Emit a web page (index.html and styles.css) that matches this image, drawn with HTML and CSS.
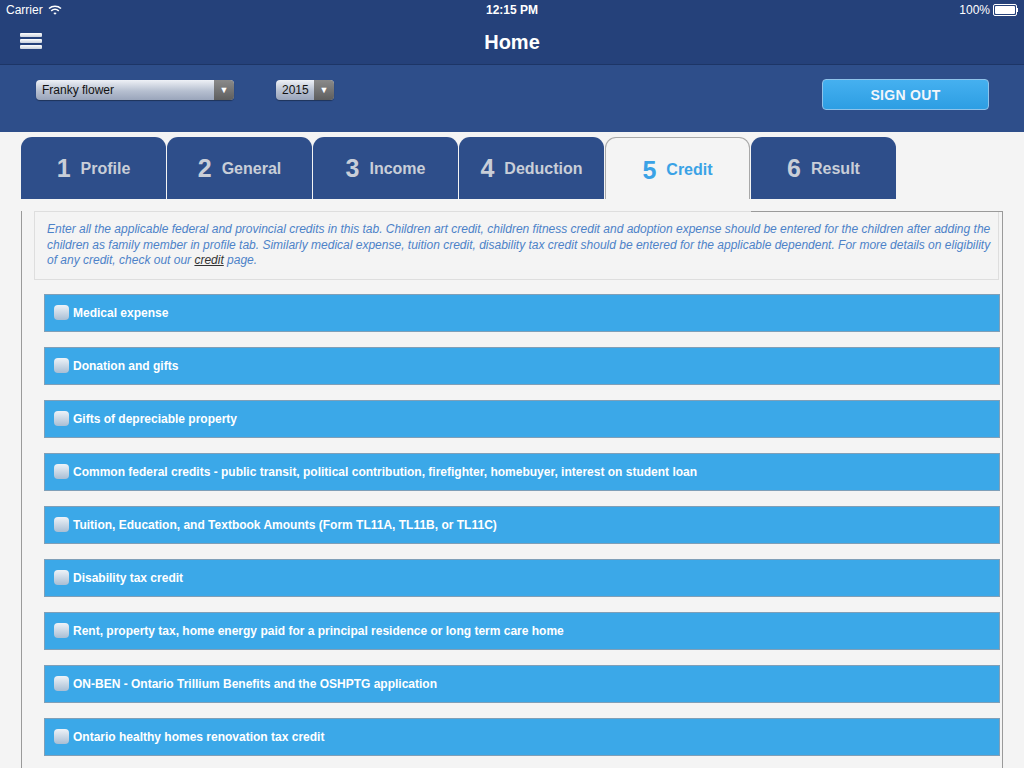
FILE: index.html
```html
<html>
<head>
  <link rel="stylesheet" href="styles.css">
</head>
<body>
  <div class="status-bar">
    <div class="carrier">Carrier
      <svg class="wifi" width="14" height="10" viewBox="0 0 14 10">
        <path d="M1 3.5 A9 9 0 0 1 13 3.5" fill="none" stroke="#fff" stroke-width="1.6"/>
        <path d="M3.2 5.8 A6 6 0 0 1 10.8 5.8" fill="none" stroke="#fff" stroke-width="1.6"/>
        <path d="M5.3 8 A3 3 0 0 1 8.7 8 L7 9.8 Z" fill="#fff"/>
      </svg>
    </div>
    <div class="clock">12:15 PM</div>
    <div class="battery">100%
      <span class="battery-body"><span class="battery-fill"></span></span><span class="battery-tip"></span>
    </div>
  </div>

  <div class="nav-bar">
    <div class="menu-icon"><span></span><span></span><span></span></div>
    <div class="nav-title">Home</div>
  </div>

  <div class="tool-bar">
    <div class="select name-select">
      <span class="select-text">Franky flower</span>
      <span class="select-arrow">&#9660;</span>
    </div>
    <div class="select year-select">
      <span class="select-text">2015</span>
      <span class="select-arrow">&#9660;</span>
    </div>
    <div class="spacer"></div>
    <button class="sign-out">SIGN OUT</button>
  </div>

  <div class="main">
    <div class="tabs">
      <div class="tab"><span class="tab-num">1</span> Profile</div>
      <div class="tab"><span class="tab-num">2</span> General</div>
      <div class="tab"><span class="tab-num">3</span> Income</div>
      <div class="tab"><span class="tab-num">4</span> Deduction</div>
      <div class="tab active"><span class="tab-num">5</span> Credit</div>
      <div class="tab"><span class="tab-num">6</span> Result</div>
    </div>
    <div class="panel">
      <div class="info">
        Enter all the applicable federal and provincial credits in this tab. Children art credit, children fitness credit and adoption expense should be entered for the children after adding the children as family member in profile tab. Similarly medical expense, tuition credit, disability tax credit should be entered for the applicable dependent. For more details on eligibility of any credit, check out our <a href="#">credit</a> page.
      </div>
      <div class="rows">
        <div class="row"><span class="check"></span>Medical expense</div>
        <div class="row"><span class="check"></span>Donation and gifts</div>
        <div class="row"><span class="check"></span>Gifts of depreciable property</div>
        <div class="row"><span class="check"></span>Common federal credits - public transit, political contribution, firefighter, homebuyer, interest on student loan</div>
        <div class="row"><span class="check"></span>Tuition, Education, and Textbook Amounts (Form TL11A, TL11B, or TL11C)</div>
        <div class="row"><span class="check"></span>Disability tax credit</div>
        <div class="row"><span class="check"></span>Rent, property tax, home energy paid for a principal residence or long term care home</div>
        <div class="row"><span class="check"></span>ON-BEN - Ontario Trillium Benefits and the OSHPTG application</div>
        <div class="row"><span class="check"></span>Ontario healthy homes renovation tax credit</div>
      </div>
    </div>
  </div>
</body>
</html>
```

FILE: styles.css
```css
html, body {
  margin: 0;
  padding: 0;
  height: 768px;
  overflow: hidden;
  background: #f4f4f4;
  font-family: 'Liberation Sans', Arial, Helvetica, sans-serif;
}
.status-bar {
  height: 20px;
  background: #25417a;
  color: #fff;
  font-size: 12px;
  display: flex;
  align-items: center;
  justify-content: space-between;
  padding: 0 6px;
}
.carrier, .battery {
  width: 120px;
  display: flex;
  align-items: center;
}
.battery {
  justify-content: flex-end;
}
.wifi {
  margin-left: 5px;
}
.clock {
  font-weight: bold;
  font-size: 12px;
}
.battery-body {
  display: inline-block;
  width: 20px;
  height: 8px;
  border: 1px solid #fff;
  border-radius: 2px;
  padding: 1px;
  margin-left: 3px;
}
.battery-fill {
  display: block;
  height: 100%;
  background: #fff;
  border-radius: 1px;
}
.battery-tip {
  display: inline-block;
  width: 1px;
  height: 4px;
  background: #fff;
}
.nav-bar {
  height: 44px;
  background: #25417a;
  border-bottom: 1px solid #1d3566;
  display: flex;
  align-items: center;
  justify-content: center;
  position: relative;
}
.menu-icon {
  position: absolute;
  left: 20px;
  top: 13px;
  width: 22px;
}
.menu-icon span {
  display: block;
  height: 4px;
  margin-bottom: 2px;
  background: linear-gradient(#ffffff, #c9d0dc);
  border-radius: 1px;
}
.nav-title {
  color: #fff;
  font-size: 20px;
  font-weight: bold;
}
.tool-bar {
  height: 67px;
  background: #2e4e8a;
  display: flex;
  align-items: flex-start;
  padding: 0 35px 0 36px;
}
.select {
  display: flex;
  height: 20px;
  margin-top: 15px;
  border-radius: 4px;
  overflow: hidden;
  background: linear-gradient(#eef1f6, #b6bfd0 55%, #9aa5bb);
  box-shadow: 0 1px 1px rgba(0, 0, 0, 0.35);
  font-size: 12px;
  color: #111;
}
.select-text {
  flex: 1;
  padding: 3px 0 0 6px;
}
.select-arrow {
  width: 20px;
  background: linear-gradient(#8a8a8a, #5e5e5e);
  color: #fff;
  font-size: 9px;
  text-align: center;
  line-height: 20px;
}
.name-select {
  width: 198px;
}
.year-select {
  width: 58px;
  margin-left: 42px;
}
.spacer {
  flex: 1;
}
.sign-out {
  margin-top: 14px;
  width: 167px;
  height: 31px;
  border: 1px solid #8fc3ea;
  border-radius: 4px;
  background: linear-gradient(#45b0f0, #2d9ee3);
  color: #f2f6fb;
  font-family: 'Liberation Sans', Arial, sans-serif;
  font-size: 14px;
  font-weight: bold;
  letter-spacing: 0.3px;
}
.main {
  padding: 5px 0 0 21px;
}
.tabs {
  display: flex;
  height: 62px;
}
.tab {
  width: 145px;
  margin-right: 1px;
  box-sizing: border-box;
  background: #2e4e8a;
  border-radius: 11px 11px 0 0;
  color: #c9ced8;
  font-size: 16px;
  font-weight: bold;
  display: flex;
  align-items: center;
  justify-content: center;
  padding-top: 1px;
}
.tab-num {
  font-size: 25px;
  margin-right: 10px;
}
.tab.active {
  background: #f4f4f4;
  border: 1px solid #a8a8a8;
  border-bottom: none;
  color: #3aa2e6;
  padding-top: 3px;
}
.panel {
  width: 980px;
  height: 569px;
  border-left: 1px solid #9a9a9a;
  border-right: 1px solid #9a9a9a;
  position: relative;
}
.panel::before {
  content: "";
  position: absolute;
  top: 0;
  left: 729px;
  right: 0;
  border-top: 1px solid #9a9a9a;
}
.info {
  margin: 12px 3px 0 12px;
  border: 1px solid #dedede;
  padding: 10px 4px 10px 12px;
  color: #4d82c8;
  font-size: 12px;
  font-style: italic;
  line-height: 15.5px;
}
.info a {
  color: #333;
  text-decoration: underline;
}
.rows {
  margin: 14px 2px 0 22px;
}
.row {
  height: 36px;
  margin-bottom: 15px;
  background: #3ba8e8;
  border: 1px solid #7f9fb8;
  display: flex;
  align-items: center;
  padding-left: 9px;
  color: #fff;
  font-size: 12px;
  font-weight: bold;
}
.check {
  width: 15px;
  height: 15px;
  border-radius: 4px;
  background: linear-gradient(#eef3f8, #a9bed4);
  margin-right: 4px;
}
```
